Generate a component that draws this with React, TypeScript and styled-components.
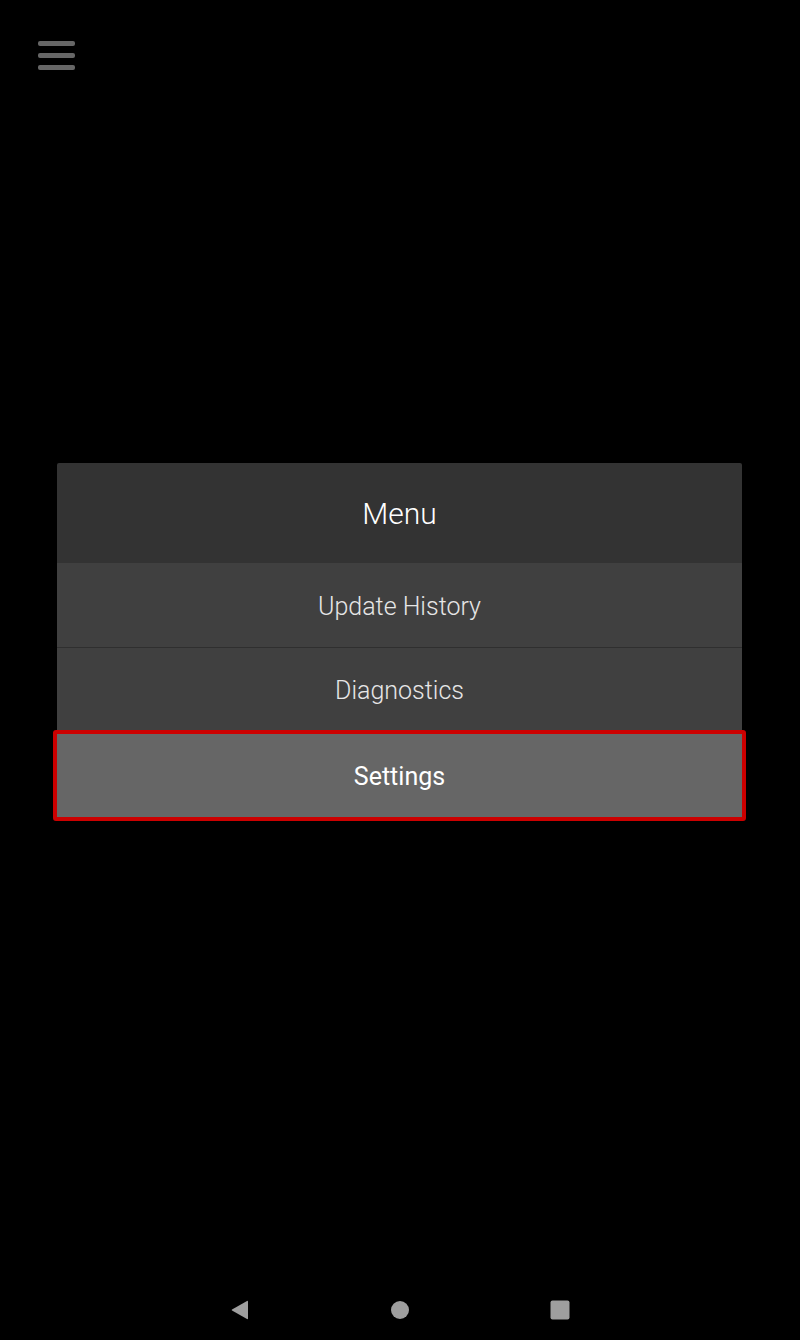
import React from "react";
import styled, { createGlobalStyle } from "styled-components";

const items = ["Update History", "Diagnostics", "Settings"];
const selected = "Settings";

const App: React.FC = () => {
  return (
    <Screen>
      <GlobalStyle />
      <TopBar>
        <Hamburger aria-label="menu">
          <Bar />
          <Bar />
          <Bar />
        </Hamburger>
      </TopBar>
      <Main>
        <MenuPanel>
          <MenuHeader>Menu</MenuHeader>
          {items.map((item, i) => {
            const active = item === selected;
            const nextActive = items[i + 1] === selected;
            return (
              <MenuItem
                key={item}
                $active={active}
                $divider={!active && !nextActive && i < items.length - 1}
              >
                {item}
              </MenuItem>
            );
          })}
        </MenuPanel>
      </Main>
      <NavBar>
        <svg width="20" height="20" viewBox="0 0 20 20">
          <path d="M18 1.5 L18 18.5 Q18 19.5 17 19 L2 10.5 Q1.3 10 2 9.5 L17 1 Q18 0.5 18 1.5 Z" fill="#9e9e9e" />
        </svg>
        <svg width="20" height="20" viewBox="0 0 20 20">
          <circle cx="10" cy="10" r="9" fill="#9e9e9e" />
        </svg>
        <svg width="20" height="20" viewBox="0 0 20 20">
          <rect x="0.5" y="0.5" width="19" height="19" rx="2" fill="#9e9e9e" />
        </svg>
      </NavBar>
    </Screen>
  );
};

export default App;

const GlobalStyle = createGlobalStyle`
  html, body {
    margin: 0;
    padding: 0;
    background: #000;
  }
  body {
    font-family: Roboto, "Liberation Sans", sans-serif;
  }
`;

const Screen = styled.div`
  width: 800px;
  height: 1340px;
  background: #000;
  display: flex;
  flex-direction: column;
  overflow: hidden;
`;

const TopBar = styled.div`
  height: 100px;
  padding: 41px 0 0 38px;
  box-sizing: border-box;
`;

const Hamburger = styled.div`
  width: 37px;
  display: flex;
  flex-direction: column;
  gap: 7px;
`;

const Bar = styled.span`
  display: block;
  height: 5px;
  border-radius: 2px;
  background: #666;
`;

const Main = styled.div`
  flex: 1;
  padding-top: 363px;
  box-sizing: border-box;
`;

const MenuPanel = styled.div`
  margin-left: 57px;
  width: 685px;
  display: flex;
  flex-direction: column;
`;

const MenuHeader = styled.div`
  height: 100px;
  background: #333;
  border-radius: 2px 2px 0 0;
  display: flex;
  align-items: center;
  justify-content: center;
  color: #fff;
  font-size: 30px;
  font-weight: 300;
`;

const MenuItem = styled.div<{ $active?: boolean; $divider?: boolean }>`
  box-sizing: border-box;
  height: ${(p) => (p.$active ? "91px" : p.$divider ? "85px" : "82px")};
  margin: ${(p) => (p.$active ? "0 -4px" : "0")};
  padding-top: 2px;
  background: ${(p) => (p.$active ? "#666" : "#404040")};
  border: ${(p) => (p.$active ? "4px solid #cc0000" : "none")};
  border-bottom: ${(p) =>
    p.$active ? "4px solid #cc0000" : p.$divider ? "1px solid #2f2f2f" : "none"};
  border-radius: ${(p) => (p.$active ? "3px" : "0")};
  display: flex;
  align-items: center;
  justify-content: center;
  color: ${(p) => (p.$active ? "#fff" : "#e6e6e6")};
  font-size: 25px;
  font-weight: ${(p) => (p.$active ? 400 : 300)};
`;

const NavBar = styled.div`
  height: 60px;
  display: flex;
  align-items: center;
  justify-content: center;
  gap: 140px;
`;
